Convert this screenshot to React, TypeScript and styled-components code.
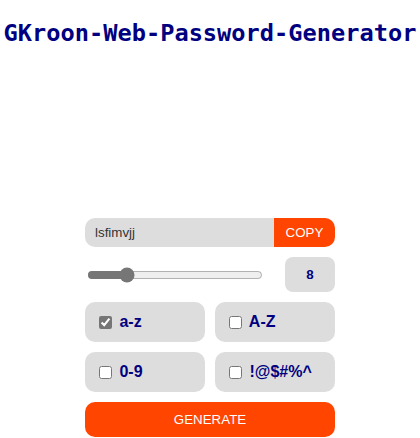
import React, { useState } from "react";
import styled, { createGlobalStyle } from "styled-components";

const Global = createGlobalStyle`
  html, body { margin: 0; padding: 0; background: #fff; }
  body { font-family: "Liberation Sans", Arial, sans-serif; }
`;

const Page = styled.div`
  display: flex;
  flex-direction: column;
  align-items: center;
`;

const Title = styled.h1`
  margin: 19px 0 0;
  font-family: "DejaVu Sans Mono", monospace;
  font-weight: bold;
  font-size: 23.65px;
  line-height: 28px;
  color: #000080;
  white-space: nowrap;
`;

const Panel = styled.div`
  margin-top: 171px;
  width: 250px;
  display: flex;
  flex-direction: column;
  gap: 10px;
`;

const OutputRow = styled.div`
  display: flex;
  height: 29px;
  border-radius: 10px;
  overflow: hidden;
`;

const Output = styled.div`
  flex: 1;
  background: #dddddd;
  color: #333;
  font-size: 13.333px;
  display: flex;
  align-items: center;
  padding-left: 10px;
`;

const CopyButton = styled.button`
  width: 61px;
  border: none;
  background: #ff4500;
  color: #fff;
  font-family: "Liberation Sans", Arial, sans-serif;
  font-size: 13.333px;
  padding: 0;
  cursor: pointer;
`;

const SliderRow = styled.div`
  display: flex;
  align-items: center;
  justify-content: space-between;
  height: 35px;
`;

const Range = styled.input`
  width: 176px;
  margin: 0 0 0 2px;
  accent-color: #767676;
`;

const Count = styled.div`
  width: 50px;
  height: 35px;
  border-radius: 8px;
  background: #dddddd;
  color: #000080;
  font-weight: bold;
  font-size: 13.333px;
  display: flex;
  align-items: center;
  justify-content: center;
`;

const OptionGrid = styled.div`
  display: grid;
  grid-template-columns: 1fr 1fr;
  gap: 10px;
`;

const Option = styled.label`
  height: 40px;
  border-radius: 10px;
  background: #dddddd;
  display: flex;
  align-items: center;
  padding-left: 10px;
  color: #000080;
  font-weight: bold;
  font-size: 16px;
  white-space: pre;
`;

const Check = styled.input`
  margin: 3px 3px 3px 4px;
  accent-color: #767676;
`;

const GenerateButton = styled.button`
  height: 35px;
  border: none;
  border-radius: 10px;
  background: #ff4500;
  color: #fff;
  font-family: "Liberation Sans", Arial, sans-serif;
  font-size: 13.333px;
  cursor: pointer;
`;

const options = [
  { label: "a-z", checked: true },
  { label: "A-Z", checked: false },
  { label: "0-9", checked: false },
  { label: "!@$#%^", checked: false },
];

export default function App() {
  const [len, setLen] = useState(8);
  const [opts, setOpts] = useState(options.map((o) => o.checked));
  return (
    <Page>
      <Global />
      <Title>GKroon-Web-Password-Generator</Title>
      <Panel>
        <OutputRow>
          <Output>lsfimvjj</Output>
          <CopyButton>COPY</CopyButton>
        </OutputRow>
        <SliderRow>
          <Range
            type="range"
            min={4}
            max={24}
            value={len}
            onChange={(e) => setLen(Number(e.target.value))}
          />
          <Count>{len}</Count>
        </SliderRow>
        <OptionGrid>
          {options.map((o, i) => (
            <Option key={o.label}>
              <Check
                type="checkbox"
                checked={opts[i]}
                onChange={() =>
                  setOpts(opts.map((v, j) => (j === i ? !v : v)))
                }
              />
              {" " + o.label}
            </Option>
          ))}
        </OptionGrid>
        <GenerateButton>GENERATE</GenerateButton>
      </Panel>
    </Page>
  );
}
